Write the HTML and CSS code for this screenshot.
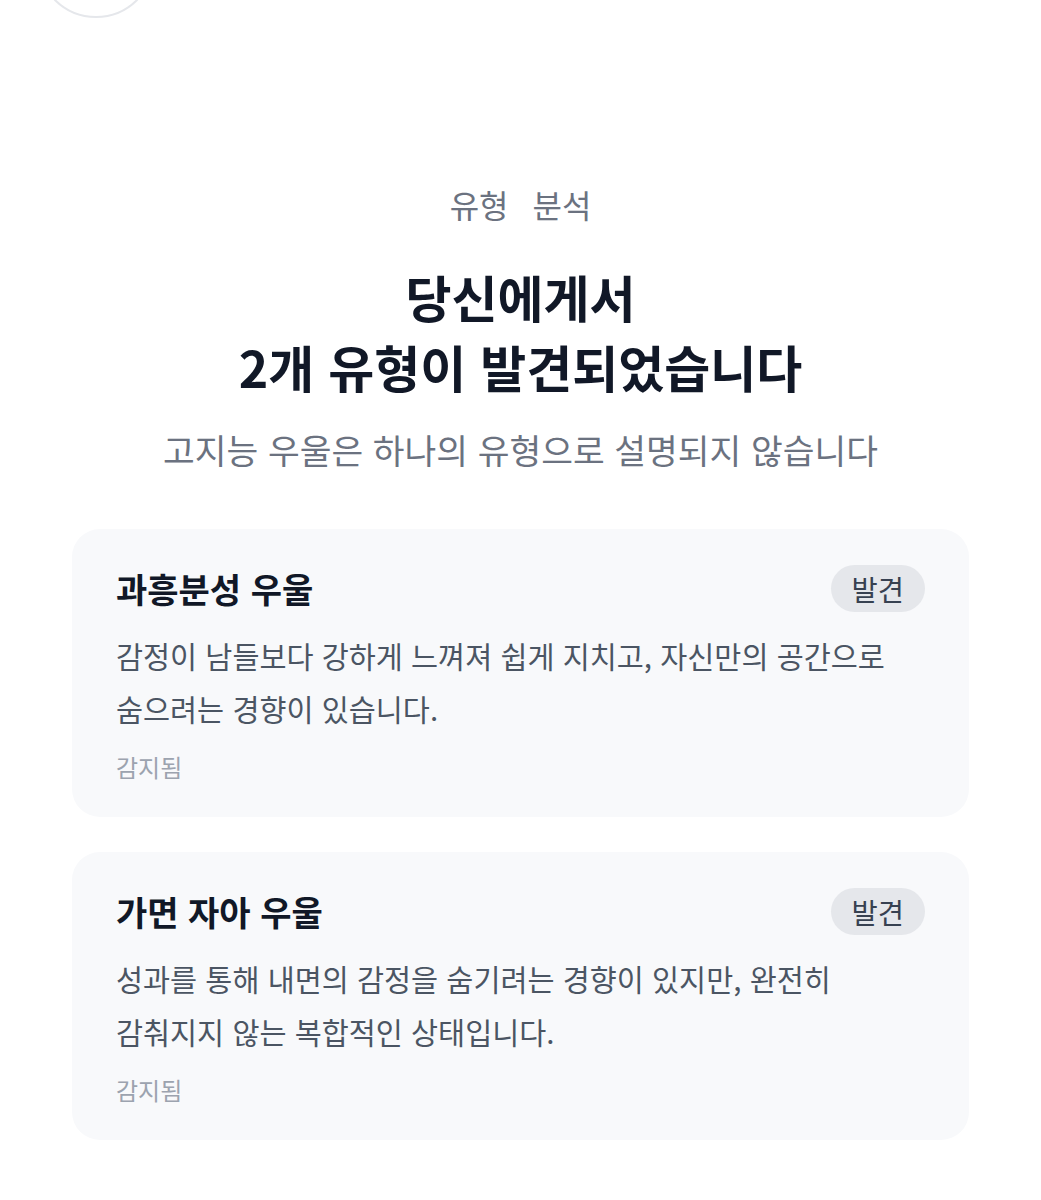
FILE: index.html
```html
<!DOCTYPE html>
<html lang="ko">
<head>
    <meta charset="UTF-8">
    <meta name="viewport" content="width=device-width, initial-scale=1.0">
    <title>유형 분석</title>
    <link rel="stylesheet" href="styles.css">
</head>
<body>
    <div class="prev-peek">
        <div class="prev-circle"></div>
    </div>

    <section class="analysis">
        <p class="eyebrow">유형 분석</p>
        <h1 class="headline">당신에게서<br>2개 유형이 발견되었습니다</h1>
        <p class="subtitle">고지능 우울은 하나의 유형으로 설명되지 않습니다</p>

        <div class="type-list">
            <div class="type-card">
                <div class="type-header">
                    <h3 class="type-name">과흥분성 우울</h3>
                    <span class="type-badge">발견</span>
                </div>
                <p class="type-desc">감정이 남들보다 강하게 느껴져 쉽게 지치고, 자신만의 공간으로 숨으려는 경향이 있습니다.</p>
                <p class="type-status">감지됨</p>
            </div>

            <div class="type-card">
                <div class="type-header">
                    <h3 class="type-name">가면 자아 우울</h3>
                    <span class="type-badge">발견</span>
                </div>
                <p class="type-desc">성과를 통해 내면의 감정을 숨기려는 경향이 있지만, 완전히 감춰지지 않는 복합적인 상태입니다.</p>
                <p class="type-status">감지됨</p>
            </div>
        </div>
    </section>
</body>
</html>
```

FILE: styles.css
```css
:root {
    --text: #111827;
    --text-muted: #6b7280;
    --text-body: #4b5563;
    --text-faint: #9ca3af;
    --card-bg: #f8f9fb;
    --badge-bg: #e5e7eb;
    --badge-text: #374151;
    --line: #e5e7eb;
}

* {
    margin: 0;
    padding: 0;
    box-sizing: border-box;
    font-family: "Noto Sans CJK KR", "Noto Sans", sans-serif;
}

body {
    background-color: #ffffff;
    color: var(--text);
    word-break: keep-all;
}

.prev-peek {
    height: 18px;
    overflow: hidden;
}

.prev-circle {
    width: 118px;
    height: 118px;
    margin: -100px 0 0 37px;
    border: 2px solid var(--line);
    border-radius: 50%;
}

.analysis {
    padding: 166px 72px 60px;
    text-align: center;
}

.eyebrow {
    font-size: 32px;
    line-height: 40px;
    color: var(--text-muted);
    word-spacing: 15px;
}

.headline {
    margin-top: 37px;
    font-size: 50px;
    line-height: 70px;
    font-weight: 700;
    color: var(--text);
}

.subtitle {
    margin-top: 26px;
    font-size: 34.5px;
    line-height: 44px;
    color: var(--text-muted);
}

.type-list {
    margin-top: 58px;
    display: flex;
    flex-direction: column;
    gap: 35px;
    text-align: left;
}

.type-card {
    background-color: var(--card-bg);
    border-radius: 28px;
    padding: 36px 44px 34px;
}

.type-header {
    display: flex;
    align-items: center;
    justify-content: space-between;
    height: 47px;
}

.type-name {
    font-size: 34px;
    font-weight: 700;
    color: var(--text);
}

.type-badge {
    display: inline-flex;
    align-items: center;
    height: 47px;
    padding: 0 21px;
    border-radius: 24px;
    background-color: var(--badge-bg);
    color: var(--badge-text);
    font-size: 28.5px;
}

.type-desc {
    margin-top: 17px;
    font-size: 29.4px;
    line-height: 53px;
    color: var(--text-body);
}

.type-status {
    margin-top: 16px;
    font-size: 24px;
    line-height: 32px;
    color: var(--text-faint);
}
```
